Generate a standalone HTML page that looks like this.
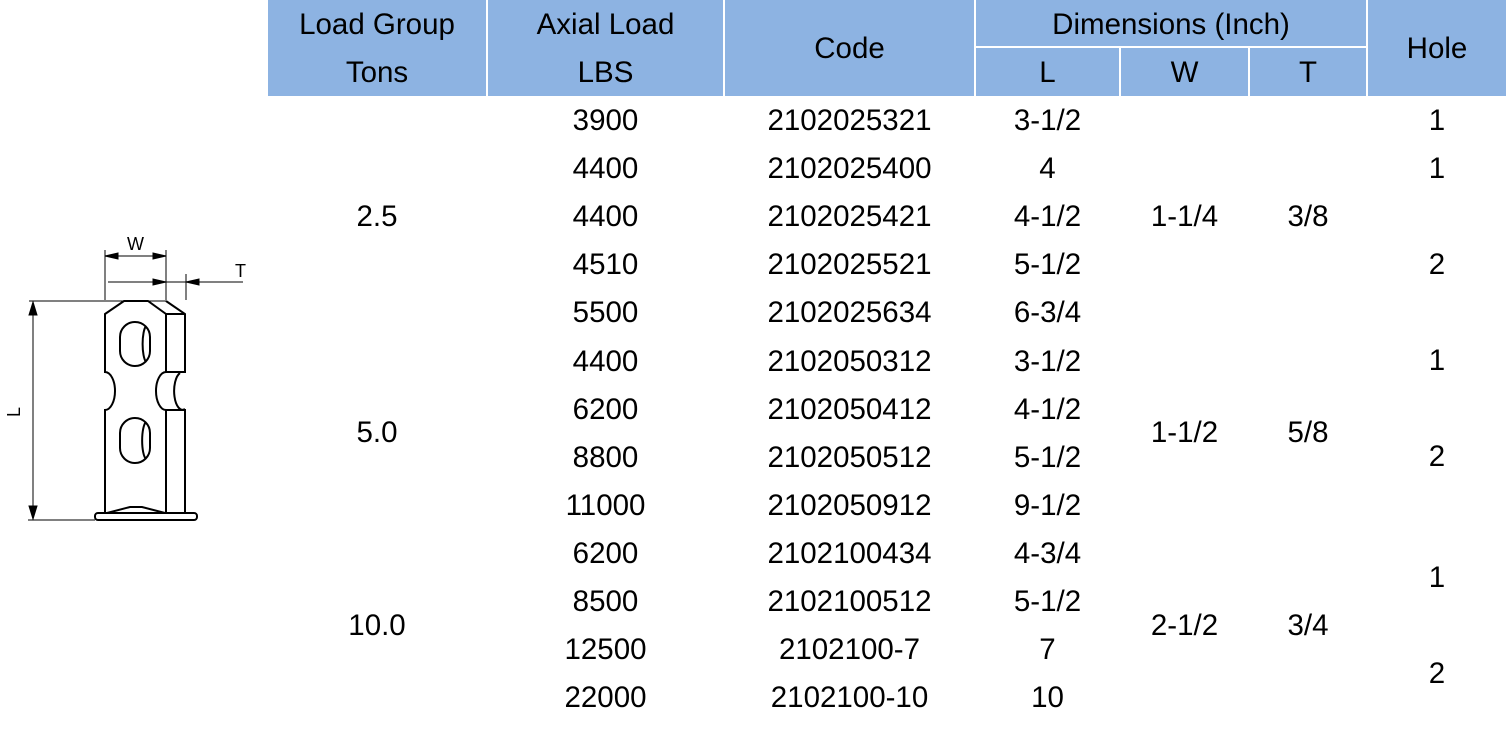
<!DOCTYPE html>
<html><head><meta charset="utf-8"><style>
body{margin:0;width:1506px;height:730px;background:#fff;position:relative;font-family:"Liberation Sans",Arial,sans-serif;color:#000;overflow:hidden}
.h{position:absolute;background:#8db3e2}
.t{position:absolute;font-size:29.5px;text-align:center;line-height:34px;transform:translateY(-17px);white-space:nowrap}
</style></head><body>
<div class="h" style="left:268px;top:0;width:218px;height:96px"></div>
<div class="h" style="left:488px;top:0;width:235px;height:96px"></div>
<div class="h" style="left:725px;top:0;width:249px;height:96px"></div>
<div class="h" style="left:976px;top:0;width:390px;height:46px"></div>
<div class="h" style="left:976px;top:48px;width:143px;height:48px"></div>
<div class="h" style="left:1121px;top:48px;width:127px;height:48px"></div>
<div class="h" style="left:1250px;top:48px;width:116px;height:48px"></div>
<div class="h" style="left:1368px;top:0;width:138px;height:96px"></div>
<div id="c"></div>
<script>
var d=[];function t(x,w,y,s){d.push('<div class="t" style="left:'+x+'px;width:'+w+'px;top:'+y+'px">'+s+'</div>')}
t(268,218,25,'Load Group');t(268,218,73,'Tons');t(488,235,25,'Axial Load');t(488,235,73,'LBS');
t(725,249,49,'Code');t(976,390,25,'Dimensions (Inch)');t(976,143,73,'L');t(1121,127,73,'W');t(1250,116,73,'T');t(1368,138,49,'Hole');
var r=[['3900','2102025321','3-1/2'],['4400','2102025400','4'],['4400','2102025421','4-1/2'],['4510','2102025521','5-1/2'],['5500','2102025634','6-3/4'],['4400','2102050312','3-1/2'],['6200','2102050412','4-1/2'],['8800','2102050512','5-1/2'],['11000','2102050912','9-1/2'],['6200','2102100434','4-3/4'],['8500','2102100512','5-1/2'],['12500','2102100-7','7'],['22000','2102100-10','10']];
r.forEach(function(a,i){var y=121+i*48.1;t(488,235,y,a[0]);t(725,249,y,a[1]);t(976,143,y,a[2]);});
t(268,218,217,'2.5');t(268,218,433,'5.0');t(268,218,626,'10.0');
t(1121,127,217,'1-1/4');t(1250,116,217,'3/8');t(1121,127,433,'1-1/2');t(1250,116,433,'5/8');t(1121,127,626,'2-1/2');t(1250,116,626,'3/4');
t(1368,138,121,'1');t(1368,138,169,'1');t(1368,138,265,'2');t(1368,138,361,'1');t(1368,138,457,'2');t(1368,138,578,'1');t(1368,138,674,'2');
document.getElementById('c').innerHTML=d.join('');
</script>
<svg style="position:absolute;left:0;top:0" width="260" height="730" fill="none" stroke="#000" stroke-width="1">
<path d="M29 301H166M33 305V516M28 520H95"/>
<path d="M33 302l-4 13h8zM33 519l-4-13h8z" fill="#000"/>
<path d="M105 250V300M166 250V300M105 256H166M108 282H243M186 274V300"/>
<path d="M105 256l13-3v6zM166 256l-13-3v6zM166 282l-13-3v6zM186 282l13-3v6z" fill="#000"/>
<text x="127" y="250" font-size="18" fill="#000" stroke="none" font-family="Liberation Sans">W</text>
<text x="235" y="277" font-size="18" fill="#000" stroke="none" font-family="Liberation Sans">T</text>
<text x="9" y="418" font-size="18" fill="#000" stroke="none" font-family="Liberation Sans" transform="rotate(-90 14 412)">L</text>
<g stroke-width="2">
<path d="M105 314L124 301H148L166 314V372A10 19 0 0 0 166 410V513H105V410A10 19 0 0 0 105 372Z"/>
<path d="M166 301L185 314V372H166M166 314H185M166 410H185V513H166"/>
<path d="M180 373A8 18 0 0 0 185 409"/>
<rect x="120" y="322" width="30" height="44" rx="15"/>
<rect x="120" y="418" width="30" height="45" rx="15"/>
<path d="M146 326A5 19 0 0 0 146 362M146 422A5 19 0 0 0 146 459"/>
<rect x="95" y="513" width="102" height="7" rx="3"/>
<path d="M107 513L130 507H142L165 513"/>
</g>
</svg>
</body></html>
